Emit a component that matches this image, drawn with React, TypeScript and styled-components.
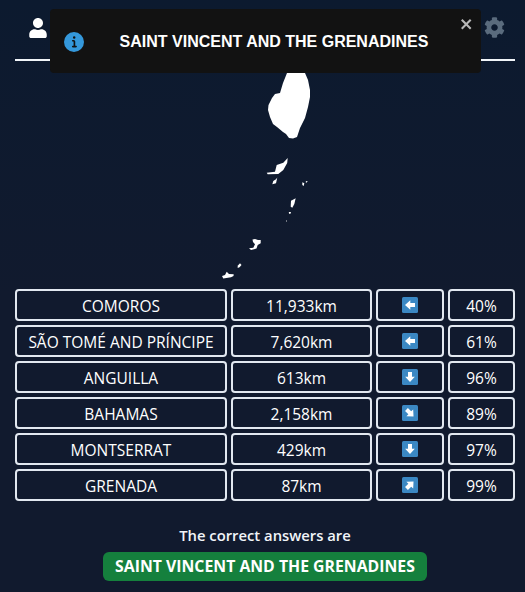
import React from 'react'
import styled, { createGlobalStyle } from 'styled-components'
import { FaUser, FaCog } from 'react-icons/fa'

interface Guess {
  name: string
  distance: string
  angle: number
  percent: string
}

const guesses: Guess[] = [
  { name: 'COMOROS', distance: '11,933km', angle: 0, percent: '40%' },
  { name: 'SÃO TOMÉ AND PRÍNCIPE', distance: '7,620km', angle: 0, percent: '61%' },
  { name: 'ANGUILLA', distance: '613km', angle: 270, percent: '96%' },
  { name: 'BAHAMAS', distance: '2,158km', angle: 225, percent: '89%' },
  { name: 'MONTSERRAT', distance: '429km', angle: 270, percent: '97%' },
  { name: 'GRENADA', distance: '87km', angle: 135, percent: '99%' }
]

const islands = [
  'M287 73 L305 73 L308 80 L310 90 L310 97 L308 107 L305 118 L300 128 L297 137 L293 138.500 L289 138 L286 134 L283 132 L277 127 L273 124 L270 117 L268 110 L268.500 105 L272 98 L275 94 L280 93 L283 83 Z',
  'M287.700 158 L287.200 163 L283.300 170 L278.300 174 L267.700 174.300 L266.700 172.700 L275 171.700 L276.700 165 L283.300 162.700 Z',
  'M277.300 177.500 L276 183.300 L272.300 184.300 L273.300 181 L276 179.300 Z',
  'M302.300 182.300 L304.300 183.300 L303.700 186 L302.300 185 Z',
  'M306.500 181 L307.700 181.300 L306.500 182.800 L305.500 182 Z',
  'M295.700 198.300 L294.300 204 L292.300 207.700 L290.700 206.700 L291 200.700 Z',
  'M288.800 212 L291 212 L290.500 213.800 L289 213.800 Z',
  'M286 220.500 L286.800 220.500 L286.800 221.500 L286 221.500 Z',
  'M252.500 239.500 L255 239 L258 240 L260.700 240 L260.700 243.300 L257.700 245 L256.500 248.500 L254 249.300 L251 250 L249 248.300 L253.300 247.700 L255 244.300 L253 242 Z',
  'M240 263.300 L241.500 265 L239.500 267.300 L237.700 268 L237.700 265.700 Z',
  'M226.700 271.700 L229 274 L233.700 274.300 L233.500 276 L231 277.300 L223.300 278.500 L222 276 L225 275 Z'
]

const App: React.FC = () => {
  return (
    <Page>
      <GlobalStyle />
      <Header>
        <FaUser />
        <SettingsIcon />
      </Header>
      <Toast>
        <InfoIcon viewBox='0 0 24 24'>
          <path d='M12 0a12 12 0 1012 12A12 12 0 0012 0zm.25 5a1.5 1.5 0 11-1.5 1.5 1.5 1.5 0 011.5-1.5zm2.25 13.5h-4a1 1 0 010-2h.75a.25.25 0 00.25-.25v-4.5a.25.25 0 00-.25-.25h-.75a1 1 0 010-2h1a2 2 0 012 2v4.75a.25.25 0 00.25.25h.75a1 1 0 110 2z' />
        </InfoIcon>
        <ToastText>SAINT VINCENT AND THE GRENADINES</ToastText>
        <CloseIcon viewBox='0 0 14 16'>
          <path d='M7.71 8.23l3.75 3.75-1.48 1.48-3.75-3.75-3.75 3.75L1 11.98l3.75-3.75L1 4.48 2.48 3l3.75 3.75L9.98 3l1.48 1.48-3.75 3.75z' />
        </CloseIcon>
      </Toast>
      <MapArea>
        <CountryMap viewBox='200 62 130 227'>
          {islands.map(d => (
            <path key={d} d={d} />
          ))}
        </CountryMap>
      </MapArea>
      <GuessTable>
        {guesses.map(guess => (
          <React.Fragment key={guess.name}>
            <Cell>{guess.name}</Cell>
            <Cell>{guess.distance}</Cell>
            <Cell>
              <ArrowIcon viewBox='0 0 16 16'>
                <rect width='16' height='16' rx='1.500' fill='#3b88c3' />
                <path
                  d='M3 8 L8.300 3.200 L8.300 6 L13 6 L13 10 L8.300 10 L8.300 12.800 Z'
                  fill='#fff'
                  transform={`rotate(${guess.angle} 8 8)`}
                />
              </ArrowIcon>
            </Cell>
            <Cell>{guess.percent}</Cell>
          </React.Fragment>
        ))}
      </GuessTable>
      <Answers>
        <AnswersTitle>The correct answers are</AnswersTitle>
        <AnswerBadge>SAINT VINCENT AND THE GRENADINES</AnswerBadge>
      </Answers>
    </Page>
  )
}

const GlobalStyle = createGlobalStyle`
  html,
  body {
    margin: 0;
    height: 592px;
    overflow: hidden;
    background: #111a2e;
  }
`

const Page = styled.div`
  position: relative;
  box-sizing: border-box;
  height: 592px;
  padding: 0 10px 0 15px;
  background: linear-gradient(#0c1a2f, #111a2e 50%);
  color: #fff;
  font-family: 'Open Sans', 'Noto Sans', sans-serif;
`

const Header = styled.header`
  display: flex;
  justify-content: space-between;
  align-items: center;
  box-sizing: border-box;
  height: 61px;
  padding: 0 10px 4px 13px;
  border-bottom: 2px solid #f1f5f9;
  font-size: 20px;
`

const SettingsIcon = styled(FaCog)`
  font-size: 21px;
  color: #5a6b7d;
`

const Toast = styled.div`
  position: absolute;
  top: 9px;
  left: 50px;
  display: flex;
  align-items: center;
  box-sizing: border-box;
  width: 431px;
  height: 64px;
  padding: 2px 14px 0;
  border-radius: 4px;
  background: #121212;
`

const InfoIcon = styled.svg`
  flex: none;
  width: 20px;
  height: 20px;
  fill: #3498db;
`

const ToastText = styled.div`
  flex: 1;
  padding-right: 3px;
  text-align: center;
  color: #fff;
  font: bold 16px 'Liberation Sans', Arial, sans-serif;
`

const CloseIcon = styled.svg`
  position: absolute;
  top: 7px;
  right: 7px;
  width: 14px;
  height: 16px;
  fill: #fff;
  opacity: 0.7;
`

const MapArea = styled.div`
  display: flex;
  justify-content: center;
  height: 227px;
  margin-top: 1px;
`

const CountryMap = styled.svg`
  width: 130px;
  height: 227px;
  fill: #fff;
`

const GuessTable = styled.div`
  display: grid;
  grid-template-columns: 212px 141px 68px 1fr;
  grid-auto-rows: 32px;
  gap: 4px;
`

const Cell = styled.div`
  display: flex;
  justify-content: center;
  align-items: center;
  box-sizing: border-box;
  padding-top: 1px;
  border: 2px solid #e2e8f0;
  border-radius: 4px;
  font-size: 15.500px;
  white-space: nowrap;
`

const ArrowIcon = styled.svg`
  width: 16px;
  height: 16px;
  margin-top: -1px;
`

const Answers = styled.div`
  display: flex;
  flex-direction: column;
  align-items: center;
  margin-top: 23px;
`

const AnswersTitle = styled.div`
  color: #f1f5f9;
  font-size: 14.800px;
  font-weight: 600;
  line-height: 22px;
`

const AnswerBadge = styled.div`
  margin-top: 6px;
  padding: 0 12px;
  border-radius: 6px;
  background: #15803d;
  color: #fff;
  font-size: 15.800px;
  font-weight: 700;
  line-height: 29px;
  white-space: nowrap;
`

export default App
